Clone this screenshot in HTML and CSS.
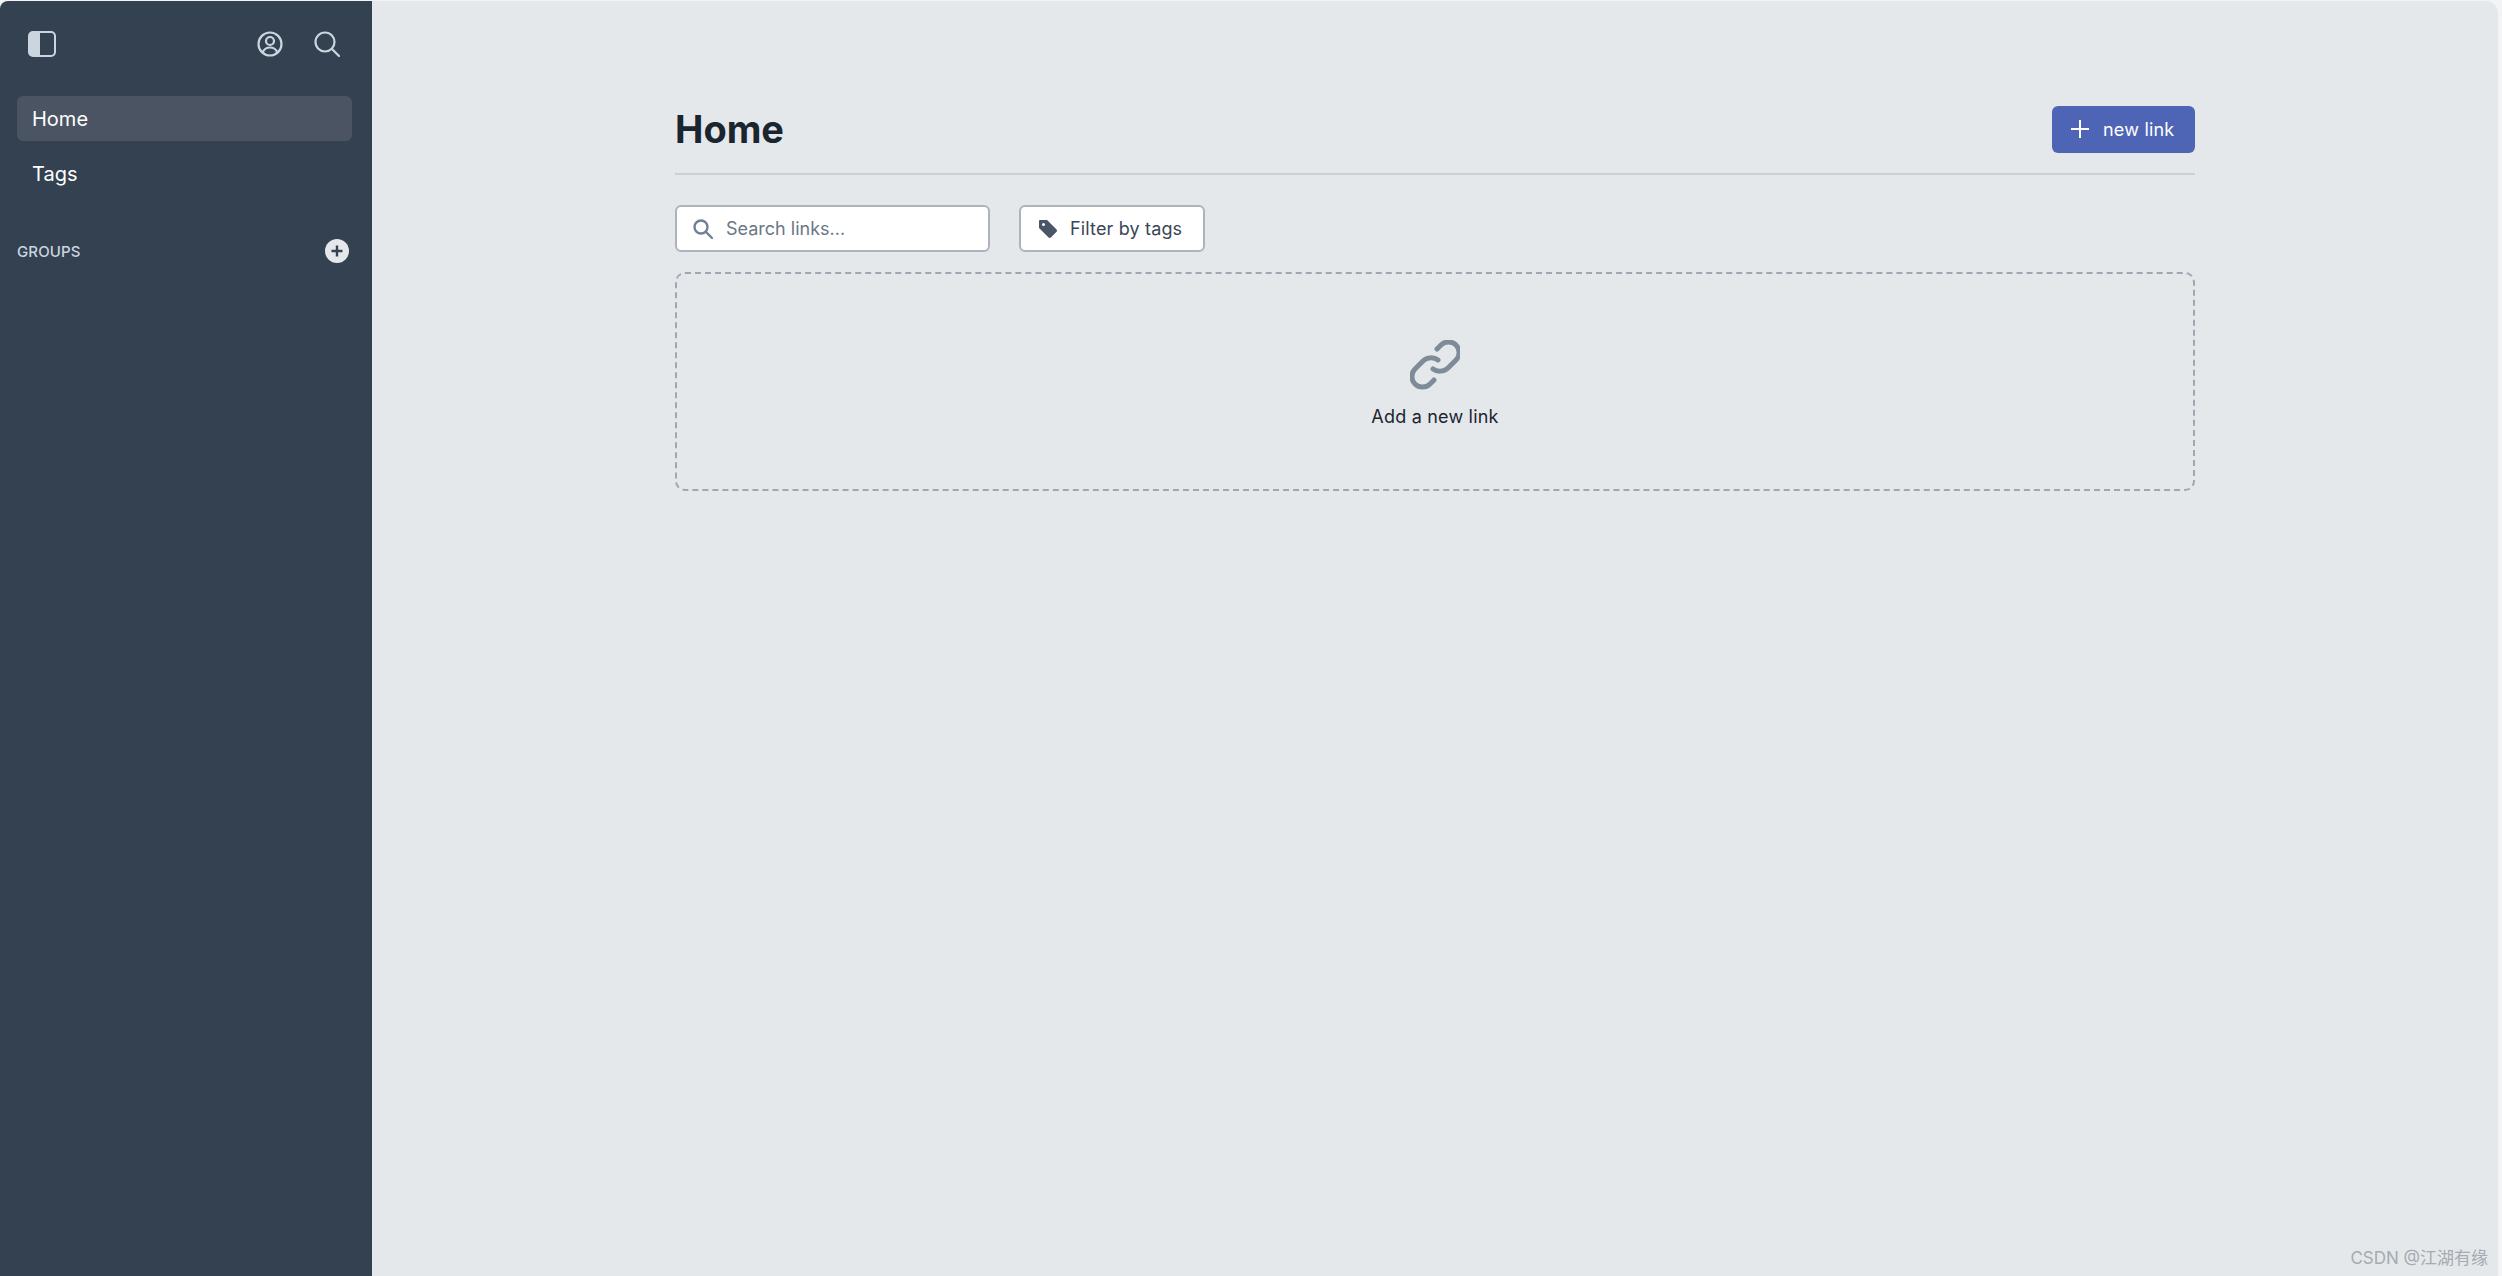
FILE: index.html
```html
<!DOCTYPE html>
<html lang="en">
<head>
<meta charset="utf-8">
<title>Home</title>
<link rel="stylesheet" href="styles.css">
</head>
<body>
<div class="app">
  <aside class="sidebar">
    <div class="side-top">
      <svg class="ico-panel" width="28" height="26" viewBox="0 0 28 26"><rect x="1" y="1" width="26" height="24" rx="4" fill="none" stroke="#cbd5e0" stroke-width="2"/><path d="M4 1h8v24H4a3 3 0 0 1-3-3V4a3 3 0 0 1 3-3z" fill="#cbd5e0"/></svg>
      <div class="side-actions">
        <svg width="26" height="26" viewBox="0 0 26 26" fill="none" stroke="#cbd5e0" stroke-width="2.200"><circle cx="13" cy="13" r="11.500"/><circle cx="13" cy="10" r="4"/><path d="M5.500 21.500c1.500-3.500 4.500-5 7.500-5s6 1.500 7.500 5"/></svg>
        <svg width="26" height="26" viewBox="0 0 26 26" fill="none" stroke="#cbd5e0" stroke-width="2.200" stroke-linecap="round"><circle cx="11" cy="11" r="9.500"/><path d="M18 18l7 7"/></svg>
      </div>
    </div>
    <nav class="side-nav">
      <a class="nav-item active">Home</a>
      <a class="nav-item">Tags</a>
    </nav>
    <div class="groups">
      <span class="groups-label">GROUPS</span>
      <svg width="24" height="24" viewBox="0 0 24 24"><circle cx="12" cy="12" r="12" fill="#e4e8eb"/><path d="M12 6.500v11M6.500 12h11" stroke="#334150" stroke-width="2.400"/></svg>
    </div>
  </aside>
  <main class="main">
    <div class="content">
      <header class="head">
        <h1 class="title">Home</h1>
        <button class="new-btn"><svg width="18" height="18" viewBox="0 0 18 18"><path d="M9 0v18M0 9h18" stroke="#fff" stroke-width="2"/></svg><span>new link</span></button>
      </header>
      <div class="filters">
        <div class="search"><svg width="20" height="20" viewBox="0 0 20 20" fill="none" stroke="#718096" stroke-width="2.400" stroke-linecap="round"><circle cx="8" cy="8" r="6.500"/><path d="M13 13l6 6"/></svg><span>Search links...</span></div>
        <button class="filter-btn"><svg width="18" height="18" viewBox="0 0 18 18"><path fill="#4a5568" fill-rule="evenodd" d="M1 0h7l9.300 9.300a2 2 0 0 1 0 2.800l-5.200 5.200a2 2 0 0 1-2.800 0L0 8V1a1 1 0 0 1 1-1zm3.500 3A1.500 1.500 0 1 0 4.500 6 1.500 1.500 0 0 0 4.500 3z"/></svg><span>Filter by tags</span></button>
      </div>
      <div class="empty">
        <svg width="50" height="50" viewBox="0 0 50 50" fill="none" stroke="#7f8b98" stroke-width="5" stroke-linecap="round"><path d="M27 9l4-4a10.600 10.600 0 0 1 15 15l-8 8c-4 4-11 4-15 1"/><path d="M24 40l-4 4A10.600 10.600 0 0 1 5 29l8-8c4-4 11-4 15-1"/></svg>
        <span class="empty-text">Add a new link</span>
      </div>
    </div>
  </main>
</div>
<div class="watermark">CSDN @江湖有缘</div>
</body>
</html>
```
FILE: styles.css
```css
* { box-sizing: border-box; }
html, body { margin: 0; height: 100%; overflow: hidden; }
body { font-family: Inter, "Noto Sans CJK SC", sans-serif; background: #f3f4f5; }
.app { display: flex; height: 1275px; width: 2498px; margin-top: 1px; border-top-left-radius: 8px; border-top-right-radius: 12px; overflow: hidden; background: #e4e8eb; }
.sidebar { width: 372px; flex: none; background: #334150; padding: 30px 20px 0 17px; }
.side-top { display: flex; justify-content: space-between; align-items: center; padding: 0 11px; height: 26px; }
.side-actions { display: flex; gap: 31px; margin-right: 1px; }
.side-nav { display: flex; flex-direction: column; gap: 10px; margin-top: 39px; }
.nav-item { display: flex; align-items: center; height: 45px; padding: 0 15px; border-radius: 6px; color: #fff; font-size: 20px; }
.nav-item.active { background: #4a5462; }
.groups { display: flex; justify-content: space-between; align-items: center; margin-top: 43px; padding-right: 3px; height: 24px; }
.groups-label { color: #cbd5e0; font-size: 15px; font-weight: 500; letter-spacing: .1px; }
.main { flex: 1; padding: 0 0 0 303px; }
.content { width: 1520px; padding-top: 105px; }
.head { display: flex; justify-content: space-between; align-items: center; height: 69px; padding-bottom: 21px; border-bottom: 2px solid #cbd0d8; }
.title { margin: 0; font-size: 38px; font-weight: 700; color: #1a2530; line-height: 46px; }
.new-btn { display: flex; align-items: center; gap: 14px; width: 143px; height: 47px; padding: 0 20px 0 19px; border: 0; border-radius: 6px; background: #4e65b6; color: #fff; font: 18px Inter, sans-serif; letter-spacing: .2px; }
.filters { display: flex; gap: 29px; margin-top: 30px; }
.search { display: flex; align-items: center; gap: 13px; width: 315px; height: 47px; padding: 0 16px; background: #fff; border: 2px solid #adb3bd; border-radius: 6px; color: #6b7785; font-size: 18px; }
.filter-btn { display: flex; align-items: center; gap: 13px; width: 186px; height: 47px; padding: 0 17px 0 18px; background: #fff; border: 2px solid #adb3bd; border-radius: 6px; color: #3a4655; font: 400 18px Inter, sans-serif; letter-spacing: .15px; }
.empty { display: flex; flex-direction: column; align-items: center; margin-top: 20px; height: 219px; padding-top: 66px; border: 2px dashed #a0a7b2; border-radius: 10px; }
.empty-text { margin-top: 16px; font-size: 18px; font-weight: 400; color: #1a2530; letter-spacing: .2px; }
.watermark { position: absolute; right: 14px; bottom: 7px; font-size: 17px; color: #a6abb0; }
```
